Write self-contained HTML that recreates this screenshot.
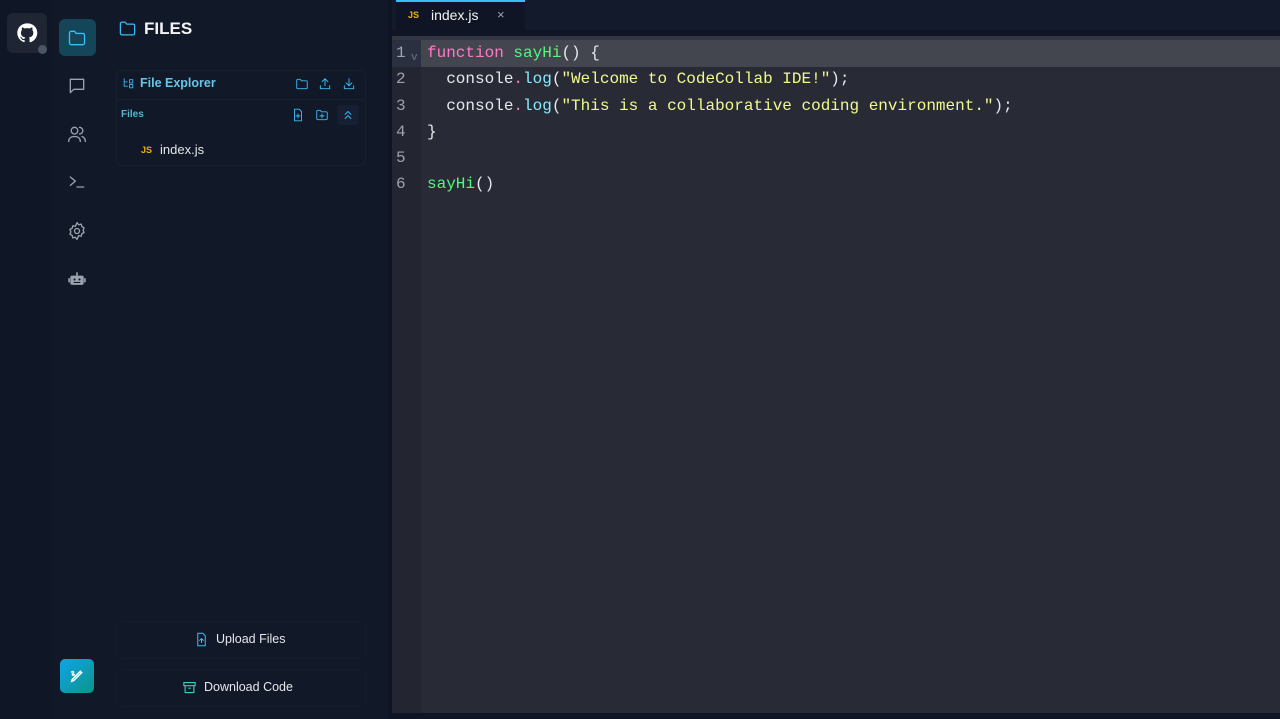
<!DOCTYPE html><html><head><style>
body{margin:0;width:1280px;height:719px;background:#111827;font-family:"Liberation Sans",sans-serif;overflow:hidden;position:relative}
.a{position:absolute}
.ic{stroke:#9ca3af;fill:none;stroke-width:1.6;stroke-linecap:round;stroke-linejoin:round}
.cy{stroke:#38bdf8;fill:none;stroke-width:1.6;stroke-linecap:round;stroke-linejoin:round}
.code{font-family:"Liberation Mono",monospace;font-size:16px;color:#e5e7eb;white-space:pre;line-height:26.3px}
</style></head><body>
<div class="a" style="left:0;top:0;width:52px;height:719px;background:#0f1626"></div>
<div class="a" style="left:52px;top:0;width:52px;height:719px;background:#111827"></div>
<div class="a" style="left:104px;top:0;width:284px;height:719px;background:#111827"></div>
<div class="a" style="left:7px;top:13px;width:40px;height:40px;background:#1f2532;border-radius:6px"></div>
<svg class="a" style="left:16px;top:22px" width="22" height="22" viewBox="0 0 24 24"><path fill="#fff" d="M12 1.5a10.5 10.5 0 0 0-3.3 20.5c.5.1.7-.2.7-.5v-1.8c-2.9.6-3.5-1.4-3.5-1.4-.5-1.2-1.2-1.5-1.2-1.5-.9-.6.1-.6.1-.6 1 .1 1.6 1.1 1.6 1.1.9 1.6 2.500 1.1 3.1.9.1-.7.4-1.1.7-1.4-2.3-.3-4.8-1.2-4.8-5.2 0-1.1.4-2.1 1.1-2.8-.1-.3-.5-1.3.1-2.8 0 0 .9-.3 2.9 1.1a10 10 0 0 1 5.3 0c2-1.4 2.9-1.1 2.9-1.1.6 1.5.2 2.5.1 2.8.7.7 1.100 1.7 1.1 2.8 0 4-2.5 4.9-4.8 5.2.4.3.7 1 .7 1.9v2.9c0 .3.2.6.7.5A10.5 10.5 0 0 0 12 1.5z"/></svg>
<div class="a" style="left:38px;top:45px;width:9px;height:9px;border-radius:50%;background:#4b5563"></div>
<div class="a" style="left:59px;top:19px;width:37px;height:37px;background:#164e63;border-radius:6px;opacity:.85"></div>
<svg class="a" style="left:67px;top:28px" width="20" height="20" viewBox="0 0 24 24"><path class="cy" d="M3 6a2 2 0 0 1 2-2h4l2 2.5h8a2 2 0 0 1 2 2V18a2 2 0 0 1-2 2H5a2 2 0 0 1-2-2z"/></svg>
<svg class="a" style="left:67px;top:76px" width="20" height="20" viewBox="0 0 24 24"><path class="ic" d="M4 4h16v12H8l-4 4z"/></svg>
<svg class="a" style="left:67px;top:124px" width="20" height="20" viewBox="0 0 24 24"><circle class="ic" cx="9" cy="8" r="4"/><path class="ic" d="M2 21c0-4 3-6 7-6s7 2 7 6M15 4a4 4 0 0 1 0 8M18 15c2 .7 4 2.5 4 6"/></svg>
<svg class="a" style="left:67px;top:172px" width="20" height="20" viewBox="0 0 24 24"><path class="ic" d="M4 6l6 5-6 5M12 18h8"/></svg>
<svg class="a" style="left:67px;top:221px" width="20" height="20" viewBox="0 0 24 24"><circle class="ic" cx="12" cy="12" r="3"/><path class="ic" d="M12 2l2 2.5 3-.8.8 3 2.7 1.5-1.2 2.8 1.2 2.8-2.7 1.5-.8 3-3-.8L12 22l-2-2.5-3 .8-.8-3-2.7-1.5L4.7 13 3.5 10.2l2.7-1.5.8-3 3 .8z"/></svg>
<svg class="a" style="left:67px;top:269px" width="20" height="20" viewBox="0 0 24 24"><rect x="4" y="8" width="16" height="11" rx="2" fill="#9ca3af"/><rect x="1.5" y="11" width="2" height="5" fill="#9ca3af"/><rect x="20.5" y="11" width="2" height="5" fill="#9ca3af"/><rect x="11" y="4" width="2" height="4" fill="#9ca3af"/><circle cx="9" cy="12.5" r="1.3" fill="#111827"/><circle cx="15" cy="12.5" r="1.3" fill="#111827"/><rect x="8" y="15.5" width="8" height="1.3" fill="#111827"/></svg>
<div class="a" style="left:60px;top:659px;width:34px;height:34px;border-radius:5px;background:linear-gradient(135deg,#0ea5e9,#0d9488)"></div>
<svg class="a" style="left:69px;top:668px" width="16" height="16" viewBox="0 0 24 24"><path stroke="#fff" stroke-width="2.2" fill="none" stroke-linecap="round" d="M4 20l3-1L19 7l-2-2L5 17zM4 6c2-2 4 0 2 2s0 4 2 2"/></svg>
<svg class="a" style="left:118px;top:19px" width="19" height="19" viewBox="0 0 24 24"><path class="cy" d="M3 6a2 2 0 0 1 2-2h4l2 2.5h8a2 2 0 0 1 2 2V18a2 2 0 0 1-2 2H5a2 2 0 0 1-2-2z"/></svg>
<div class="a" style="left:144px;top:19px;color:#f3f4f6;font-weight:bold;font-size:17px">FILES</div>
<div class="a" style="left:116px;top:70px;width:248px;height:94px;border:1px solid #172033;border-radius:6px"></div>
<div class="a" style="left:116px;top:99px;width:248px;height:1px;background:#172033"></div>
<svg class="a" style="left:122px;top:77px" width="13" height="13" viewBox="0 0 24 24"><path class="cy" d="M4 3v14h6M4 9h6M14 5h6v6h-6zM14 14h6v6h-6z"/></svg>
<div class="a" style="left:140px;top:76px;color:#67c5e6;font-size:12.5px;font-weight:bold">File Explorer</div>
<div class="a" style="left:121px;top:109px;color:#5fb3cf;font-size:10px;font-weight:bold">Files</div>
<svg class="a" style="left:295px;top:77px" width="14" height="14" viewBox="0 0 24 24"><path class="cy" d="M3 6a2 2 0 0 1 2-2h4l2 2.5h8a2 2 0 0 1 2 2V18a2 2 0 0 1-2 2H5a2 2 0 0 1-2-2z"/></svg>
<svg class="a" style="left:318px;top:77px" width="14" height="14" viewBox="0 0 24 24"><path class="cy" d="M12 15V3M7 8l5-5 5 5M4 15v5h16v-5"/></svg>
<svg class="a" style="left:342px;top:77px" width="14" height="14" viewBox="0 0 24 24"><path class="cy" d="M12 3v12M7 10l5 5 5-5M4 15v5h16v-5"/></svg>
<svg class="a" style="left:291px;top:108px" width="14" height="14" viewBox="0 0 24 24"><path class="cy" d="M14 2H6v20h12V6zM12 10v7M8.5 13.5h7"/></svg>
<svg class="a" style="left:315px;top:108px" width="14" height="14" viewBox="0 0 24 24"><path class="cy" d="M3 6a2 2 0 0 1 2-2h4l2 2.5h8a2 2 0 0 1 2 2V18a2 2 0 0 1-2 2H5a2 2 0 0 1-2-2zM12 10v7M8.5 13.5h7"/></svg>
<div class="a" style="left:337px;top:105px;width:22px;height:20px;background:#172033;border-radius:4px"></div>
<svg class="a" style="left:341px;top:108px" width="14" height="14" viewBox="0 0 24 24"><path class="cy" d="M7 11l5-5 5 5M7 18l5-5 5 5"/></svg>
<div class="a" style="left:141px;top:145px;color:#eab308;font-size:9px;font-weight:bold">JS</div>
<div class="a" style="left:160px;top:142px;color:#e5e7eb;font-size:13px">index.js</div>
<div class="a" style="left:116px;top:621px;width:248px;height:36px;border:1px solid #141c2d;border-radius:6px"></div>
<div class="a" style="left:116px;top:669px;width:248px;height:36px;border:1px solid #141c2d;border-radius:6px"></div>
<svg class="a" style="left:194px;top:632px" width="15" height="15" viewBox="0 0 24 24"><path class="cy" d="M14 2H6v20h12V6zM12 17v-6M9 13.5l3-3 3 3"/></svg>
<div class="a" style="left:216px;top:632px;color:#e5e7eb;font-size:12.5px">Upload Files</div>
<svg class="a" style="left:182px;top:680px" width="15" height="15" viewBox="0 0 24 24"><path stroke="#2dd4bf" stroke-width="1.8" fill="none" d="M3 4h18v5H3zM5 9v11h14V9M10 13h4"/></svg>
<div class="a" style="left:204px;top:680px;color:#e5e7eb;font-size:12.5px">Download Code</div>
<div class="a" style="left:388px;top:0;width:892px;height:719px;background:#0f1524"></div>
<div class="a" style="left:392px;top:0;width:888px;height:30px;background:#121a2b"></div>
<div class="a" style="left:396px;top:0;width:129px;height:30px;background:#0f1524;border-top:2px solid #38bdf8;box-sizing:border-box"></div>
<div class="a" style="left:408px;top:10px;color:#eab308;font-size:9px;font-weight:bold">JS</div>
<div class="a" style="left:431px;top:7px;color:#f3f4f6;font-size:14px">index.js</div>
<div class="a" style="left:497px;top:7px;color:#9ca3af;font-size:13px">×</div>
<div class="a" style="left:392px;top:36px;width:888px;height:4px;background:#333640"></div>
<div class="a" style="left:392px;top:40px;width:888px;height:673px;background:#282a36"></div>
<div class="a" style="left:392px;top:40px;width:29px;height:673px;background:#232530"></div>
<div class="a" style="left:421px;top:40px;width:859px;height:27px;background:#44464f"></div>
<div class="a" style="left:392px;top:40px;width:29px;height:27px;background:#2a3040"></div>
<div class="a code" style="left:396px;top:40px;color:#9ca3af">1
2
3
4
5
6</div>
<div class="a" style="left:411px;top:52px;color:#6b7280;font-size:11px;font-family:'Liberation Mono',monospace">v</div>
<div class="a code" style="left:427px;top:40px"><span style="color:#ff79c6">function</span> <span style="color:#50fa7b">sayHi</span>() {
  console<span style="color:#ff79c6">.</span><span style="color:#8be9fd">log</span>(<span style="color:#f1fa8c">"Welcome to CodeCollab IDE!"</span>);
  console<span style="color:#ff79c6">.</span><span style="color:#8be9fd">log</span>(<span style="color:#f1fa8c">"This is a collaborative coding environment."</span>);
}

<span style="color:#50fa7b">sayHi</span>()</div>
</body></html>
